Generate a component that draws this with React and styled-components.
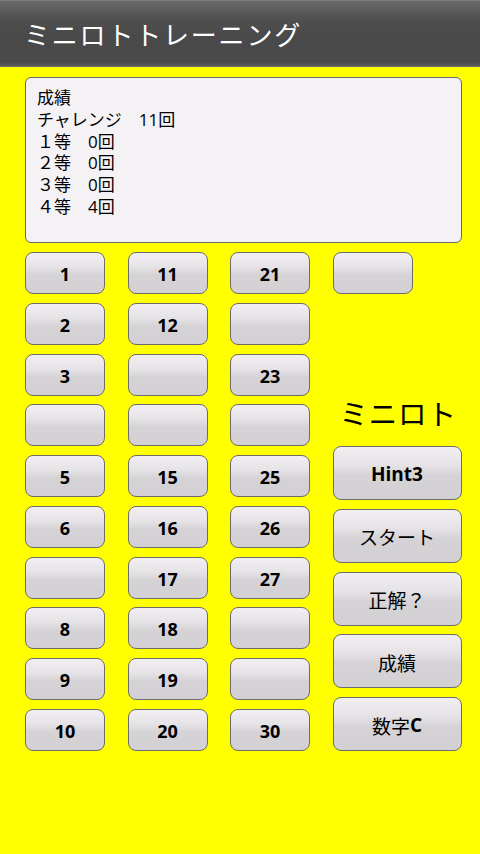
import React from 'react';
import styled, { createGlobalStyle } from 'styled-components';

const GlobalStyle = createGlobalStyle`
  html, body {
    margin: 0;
    padding: 0;
    background: #ffff00;
  }
  body {
    font-family: "Open Sans", "Noto Sans CJK JP", sans-serif;
  }
`;

const Screen = styled.div`
  width: 480px;
  min-height: 854px;
  background: #ffff00;
`;

const TitleBar = styled.header`
  height: 66px;
  display: flex;
  align-items: center;
  padding-left: 24px;
  background: linear-gradient(to bottom, #8a8a8a 0px, #6a6a6a 1px, #4e4e4e 20px, #494949 40px, #4a4a4a 62px, #5a5a5a 66px);
  border-bottom: 1px solid #6e6e6e;
`;

const Title = styled.h1`
  margin: 0;
  color: #ffffff;
  font-family: "Noto Sans CJK JP", sans-serif;
  font-weight: 400;
  font-size: 26px;
  letter-spacing: 1.8px;
`;

const Body = styled.main`
  padding: 10px 18px 0 25px;
`;

const ScoreBox = styled.section`
  box-sizing: border-box;
  width: 437px;
  height: 166px;
  padding: 9px 11px;
  background: #f5f2f5;
  border: 1px solid #676767;
  border-radius: 6px;
  font-family: "Open Sans", "Noto Sans CJK JP", sans-serif;
  font-size: 17px;
  line-height: 21.8px;
  color: #000;
`;

const ScoreLine = styled.div`
  white-space: pre;
`;

const Board = styled.div`
  margin-top: 9px;
  display: grid;
  grid-template-columns: 80px 80px 80px 129px;
  column-gap: 22.5px;
`;

const Column = styled.div`
  height: 499px;
  display: flex;
  flex-direction: column;
  justify-content: space-between;
`;

const SideColumn = styled.div`
  height: 499px;
  display: flex;
  flex-direction: column;
`;

const Key = styled.button`
  box-sizing: border-box;
  width: ${(p) => (p.$wide ? '129px' : '80px')};
  height: ${(p) => (p.$wide ? '54px' : '42px')};
  padding: 2px 0 0;
  border: 1.3px solid #6c6c6c;
  border-radius: 8px;
  background: linear-gradient(to bottom, #f1eff2 0%, #e6e3e7 35%, #d6d3d7 55%, #d3d0d4 100%);
  color: #000;
  font-family: "Open Sans", "Noto Sans CJK JP", sans-serif;
  font-weight: 700;
  font-size: ${(p) => (p.$wide ? '19px' : '18px')};
  display: flex;
  align-items: center;
  justify-content: center;
`;

const Jp = styled.span`
  font-family: "Noto Sans CJK JP", sans-serif;
  font-weight: 400;
`;

const GameLabel = styled.div`
  margin-top: auto;
  margin-bottom: 13px;
  padding-left: 7px;
  font-family: "Noto Sans CJK JP", sans-serif;
  font-size: 28.5px;
  line-height: 40px;
  letter-spacing: 0.8px;
  color: #000;
`;

const ActionStack = styled.div`
  display: flex;
  flex-direction: column;
  gap: 8.75px;
`;

const columns = [
  ['1', '2', '3', '', '5', '6', '', '8', '9', '10'],
  ['11', '12', '', '', '15', '16', '17', '18', '19', '20'],
  ['21', '', '23', '', '25', '26', '27', '', '', '30'],
];

const scores = [
  '成績',
  'チャレンジ　11回',
  '１等　0回',
  '２等　0回',
  '３等　0回',
  '４等　4回',
];

const App = () => {
  return (
    <>
      <GlobalStyle />
      <Screen>
        <TitleBar>
          <Title>ミニロトトレーニング</Title>
        </TitleBar>
        <Body>
          <ScoreBox>
            {scores.map((line, i) => (
              <ScoreLine key={i}>{line}</ScoreLine>
            ))}
          </ScoreBox>
          <Board>
            {columns.map((col, c) => (
              <Column key={c}>
                {col.map((n, r) => (
                  <Key key={r}>{n}</Key>
                ))}
              </Column>
            ))}
            <SideColumn>
              <Key />
              <GameLabel>ミニロト</GameLabel>
              <ActionStack>
                <Key $wide>Hint3</Key>
                <Key $wide><Jp>スタート</Jp></Key>
                <Key $wide><Jp>正解？</Jp></Key>
                <Key $wide><Jp>成績</Jp></Key>
                <Key $wide><Jp>数字</Jp>C</Key>
              </ActionStack>
            </SideColumn>
          </Board>
        </Body>
      </Screen>
    </>
  );
};

export default App;
